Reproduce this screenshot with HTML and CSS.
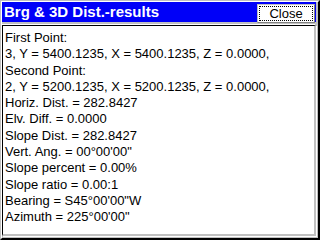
FILE: index.html
```html
<!DOCTYPE html>
<html>
<head>
<meta charset="utf-8">
<link rel="stylesheet" href="styles.css">
</head>
<body>
<div class="window">
  <div class="inner">
    <div class="titlebar">
      <span class="title">Brg &amp; 3D Dist.-results</span>
      <button class="close"><span class="focus">Close</span></button>
    </div>
    <div class="content">
      <div class="line">First Point:</div>
      <div class="line">3, Y = 5400.1235, X = 5400.1235, Z = 0.0000,</div>
      <div class="line">Second Point:</div>
      <div class="line">2, Y = 5200.1235, X = 5200.1235, Z = 0.0000,</div>
      <div class="line">Horiz. Dist. = 282.8427</div>
      <div class="line">Elv. Diff. = 0.0000</div>
      <div class="line">Slope Dist. = 282.8427</div>
      <div class="line">Vert. Ang. = 00°00'00"</div>
      <div class="line">Slope percent = 0.00%</div>
      <div class="line">Slope ratio = 0.00:1</div>
      <div class="line">Bearing = S45°00'00"W</div>
      <div class="line">Azimuth = 225°00'00"</div>
    </div>
  </div>
</div>
</body>
</html>
```
FILE: styles.css
```css
html, body {
  margin: 0;
  padding: 0;
  background: #ffffff;
}
.window {
  width: 320px;
  height: 240px;
  box-sizing: border-box;
  border-left: 1px solid #c0c0c0;
  border-top: 1px solid #c0c0c0;
  border-right: 1px solid #000000;
  border-bottom: 1px solid #000000;
  background: #c0c0c0;
}
.inner {
  height: 100%;
  box-sizing: border-box;
  border-left: 1px solid #ffffff;
  border-top: 1px solid #ffffff;
  border-right: 1px solid #000000;
  border-bottom: 1px solid #000000;
  padding: 0 2px 2px 0;
  display: flex;
  flex-direction: column;
  background: #c0c0c0;
}
.titlebar {
  height: 20px;
  background: #0000f8;
  display: flex;
  align-items: center;
  justify-content: space-between;
  padding: 0 1px 0 2px;
}
.title {
  color: #ffffff;
  font-family: "Liberation Sans", Arial, sans-serif;
  font-weight: bold;
  font-size: 15px;
  line-height: 20px;
}
.close {
  width: 58px;
  height: 19px;
  margin: 2px 0 0 0;
  padding: 1px;
  box-sizing: border-box;
  background: #ffffff;
  border: 1px solid #c0c0c0;
  border-right-color: #808080;
  border-bottom-color: #808080;
  display: flex;
}
.focus {
  flex: 1;
  border: 1px dotted #000000;
  font-family: "Liberation Sans", Arial, sans-serif;
  font-size: 13px;
  line-height: 13px;
  color: #000000;
  text-align: center;
}
.content {
  flex: 1;
  margin: 3px 0 0 0;
  border-left: 1px solid #000000;
  border-top: 1px solid #000000;
  border-right: 2px solid #c0c0c0;
  border-bottom: 2px solid #c0c0c0;
  box-shadow: 1px 1px 0 #ffffff, -1px -1px 0 #ffffff;
  padding: 4px 0 0 2px;
  background: #ffffff;
  font-family: "Liberation Sans", Arial, sans-serif;
  font-size: 13px;
  line-height: 16.3px;
  color: #000000;
}
.line {
  white-space: nowrap;
}
```
